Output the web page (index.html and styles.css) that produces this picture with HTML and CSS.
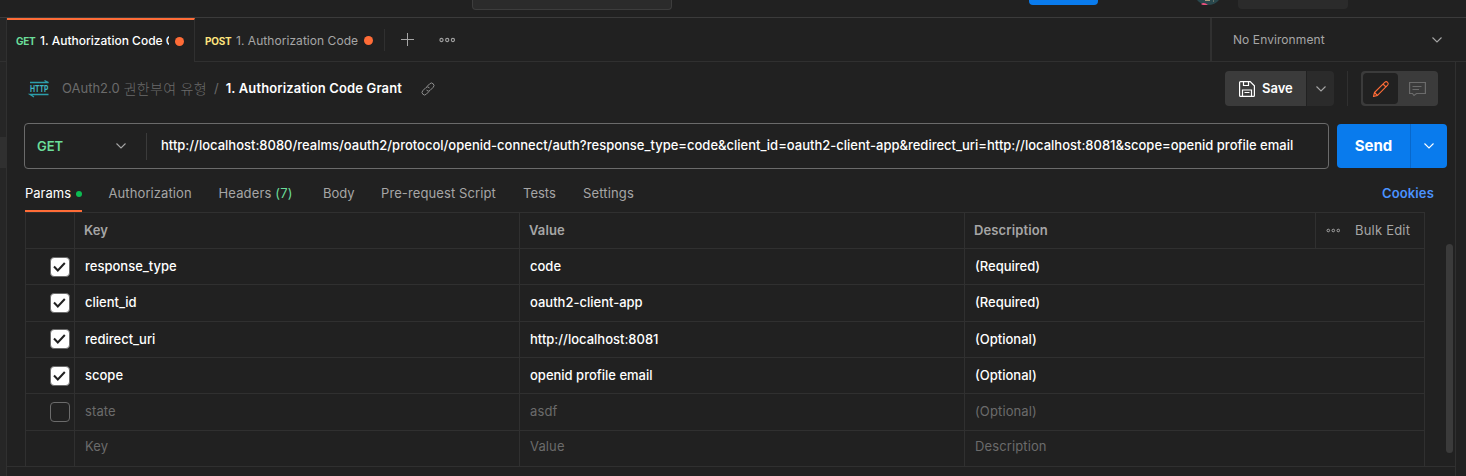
FILE: index.html
```html
<!DOCTYPE html>
<html lang="ko">
<head>
<meta charset="utf-8">
<title>1. Authorization Code Grant</title>
<link rel="stylesheet" href="styles.css">
</head>
<body>
<div class="app">
  <header class="topbar">
    <div class="search"></div>
    <div class="invite"></div>
    <svg class="avatar" width="24" height="5" viewBox="0 0 24 5"><path d="M1 0h22q-4 5-11 5T1 0z" fill="#29474c"/><path d="M5 4q3-2.500 7 1-5 .5-7-1z" fill="#f0507e"/><path d="M9 .5h5M17 1h1" stroke="#a99e82"/></svg>
    <div class="upgrade"></div>
  </header>
  <div class="body">
    <aside class="rail"><div class="rail-tabs"></div><div class="rail-selected"></div></aside>
    <main class="main">
      <div class="tabbar">
        <div class="tab tab-active"><b class="verb get">GET</b><span class="tab-name">1. Authorization Code G</span><i class="unsaved"></i></div>
        <div class="tab tab-second"><b class="verb post">POST</b><span class="tab-name">1. Authorization Code</span><i class="unsaved"></i></div>
        <div class="tab-tools">
          <svg width="14" height="14" viewBox="0 0 14 14" fill="none" stroke="#a6a6a6"><path d="M6.500 0v13M0 6.500h13"/></svg>
          <svg class="more" width="17" height="6" viewBox="0 0 17 6" fill="none" stroke="#a0a0a0" stroke-width="1.1"><circle cx="2.5" cy="3" r="1.6"/><circle cx="8.2" cy="3" r="1.6"/><circle cx="13.9" cy="3" r="1.6"/></svg>
        </div>
        <div class="environment"><span>No Environment</span><svg width="12" height="8" viewBox="0 0 12 8" fill="none" stroke="#a6a6a6" stroke-width="1.1"><path d="M1.5 1.5 6 6l4.500-4.500"/></svg></div>
      </div>
      <div class="workspace">
        <section class="request">
          <div class="crumbs">
            <svg class="http" width="19" height="18" viewBox="0 0 19 18"><g fill="none" stroke="#2d9eab" stroke-width="1.300"><path d="M0 2.500h18.500L14.500.5M18.500 14.500H0l4 2.500"/></g><text x="0" y="12.300" textLength="18.500" lengthAdjust="spacingAndGlyphs">HTTP</text></svg>
            <span class="folder">OAuth2.0 <span class="korean">권한부여 유형</span></span><span class="slash">/</span><span class="title">1. Authorization Code Grant</span>
            <svg class="link" width="14" height="14" viewBox="0 0 14 14" fill="none" stroke="#909090" stroke-width="1" stroke-linecap="round"><path d="M6.200 4.300 8.700 1.800a2.400 2.400 0 0 1 3.500 3.500L9.100 8.400a2.300 2.300 0 0 1-3.300 0M7.800 9.700l-2.500 2.500a2.400 2.400 0 0 1-3.500-3.500l3.100-3.100a2.300 2.300 0 0 1 3.300 0"/></svg>
            <div class="save"><svg width="16" height="16" viewBox="0 0 16 16" fill="none" stroke="#fff" stroke-width="1.200"><path d="M1.500.6h9.700l4.200 4.200v9.700q0 .9-.9.900h-13q-.9 0-.9-.9v-13q0-.9.9-.9zM4.500.8v3.700h5V.8M3.500 15.200V9h9v6.200M5.500 11.500h5"/></svg><span>Save</span></div>
            <div class="save-more"><svg width="12" height="8" viewBox="0 0 12 8" fill="none" stroke="#a6a6a6" stroke-width="1.1"><path d="M1.500 1.500 6 6l4.500-4.500"/></svg></div>
            <div class="divider"></div>
            <div class="toggle">
              <div class="toggle-on"><svg width="18" height="18" viewBox="0 0 18 18" fill="none" stroke="#ff6c37" stroke-width="1.100" stroke-linejoin="round"><path d="M1.500 16.500l1-4L12.700 2.300q1.500-1.300 2.900 0t0 2.900L5.500 15.400zM11 4l3 3M2.500 12.500l3 3"/></svg></div>
              <div class="toggle-off"><svg width="17" height="16" viewBox="0 0 17 16" fill="none" stroke="#6b6b6b" stroke-width="1.200"><path d="M.6 1.500h15.800v11H7.500L5 14.500l-1.500-2H.6zM3.500 5.500h9M3.500 8.500h6.500"/></svg></div>
            </div>
          </div>
          <div class="url-row">
            <div class="url-box">
              <div class="method"><span>GET</span><svg width="12" height="8" viewBox="0 0 12 8" fill="none" stroke="#a6a6a6" stroke-width="1.1"><path d="M1.500 1.500 6 6l4.500-4.500"/></svg></div>
              <div class="url">http://localhost:8080/realms/oauth2/protocol/openid-connect/auth?response_type=code&amp;client_id=oauth2-client-app&amp;redirect_uri=http://localhost:8081&amp;scope=openid profile email</div>
            </div>
            <div class="send"><span class="send-label">Send</span><span class="send-more"><svg width="12" height="8" viewBox="0 0 12 8" fill="none" stroke="#fff" stroke-width="1.1"><path d="M1.500 1.500 6 6l4.500-4.500"/></svg></span></div>
          </div>
          <nav class="sections">
            <span class="section-on">Params<i class="dot"></i></span><span class="s-auth">Authorization</span><span class="s-head">Headers <em>(7)</em></span><span class="s-body">Body</span><span class="s-pre">Pre-request Script</span><span class="s-tests">Tests</span><span class="s-set">Settings</span><span class="cookies">Cookies</span>
          </nav>
          <div class="params">
            <div class="row head"><div></div><div>Key</div><div>Value</div><div>Description</div><div class="bulk"><svg width="14" height="6" viewBox="0 0 14 6" fill="none" stroke="#a6a6a6" stroke-width="1"><circle cx="2.300" cy="2.500" r="1.300"/><circle cx="7.300" cy="2.500" r="1.300"/><circle cx="12.300" cy="2.500" r="1.300"/></svg><span>Bulk Edit</span></div></div>
            <div class="row"><div><i class="check"><svg width="14" height="12" viewBox="0 0 14 12"><path d="M1 5.500l3.800 4L11.800 2" fill="none" stroke="#212121" stroke-width="2"/></svg></i></div><div>response_type</div><div>code</div><div>(Required)</div></div>
            <div class="row tall"><div><i class="check"><svg width="14" height="12" viewBox="0 0 14 12"><path d="M1 5.500l3.800 4L11.800 2" fill="none" stroke="#212121" stroke-width="2"/></svg></i></div><div>client_id</div><div>oauth2-client-app</div><div>(Required)</div></div>
            <div class="row raised"><div><i class="check"><svg width="14" height="12" viewBox="0 0 14 12"><path d="M1 5.500l3.800 4L11.800 2" fill="none" stroke="#212121" stroke-width="2"/></svg></i></div><div>redirect_uri</div><div>http://localhost:8081</div><div>(Optional)</div></div>
            <div class="row"><div><i class="check"><svg width="14" height="12" viewBox="0 0 14 12"><path d="M1 5.500l3.800 4L11.800 2" fill="none" stroke="#212121" stroke-width="2"/></svg></i></div><div>scope</div><div>openid profile email</div><div>(Optional)</div></div>
            <div class="row tall disabled"><div><i class="check empty"></i></div><div>state</div><div>asdf</div><div>(Optional)</div></div>
            <div class="row blank"><div></div><div>Key</div><div>Value</div><div>Description</div></div>
          </div>
          <div class="scrollbar"></div>
        </section>
        <aside class="side"></aside>
      </div>
    </main>
  </div>
</div>
</body>
</html>
```
FILE: styles.css
```css
* { box-sizing: border-box; }
body { margin: 0; background: #212121; color: #a6a6a6; font: 13px/20px Inter, "Noto Sans CJK KR", sans-serif; overflow: hidden; }
svg { display: block; flex: none; }
i, em { font-style: normal; }
.app { width: 1466px; height: 476px; display: flex; flex-direction: column; white-space: nowrap; }

.topbar { height: 18px; border-bottom: 1px solid #3b3b3b; display: flex; align-items: flex-start; padding-left: 472px; }
.search { width: 200px; height: 10px; background: #2b2b2b; border: 1px solid #3d3d3d; border-top: 0; border-radius: 0 0 4px 4px; }
.invite { width: 69px; height: 5px; margin-left: 357px; background: #097bed; border-radius: 0 0 4px 4px; }
.avatar { margin-left: 98px; }
.upgrade { width: 110px; height: 9px; margin-left: 18px; background: #2b2b2b; border-radius: 0 0 4px 4px; }

.body { flex: 1; display: flex; min-height: 0; }
.rail { width: 7px; background: #262626; border-right: 1px solid #303030; }
.rail-tabs { height: 44px; border-bottom: 1px solid #303030; }
.rail-selected { height: 31px; margin-top: 75px; background: #303030; }
.main { flex: 1; display: flex; flex-direction: column; }

.tabbar { height: 44px; display: flex; border-bottom: 1px solid #303030; }
.tab { display: flex; align-items: center; font-size: 12px; padding-top: 2px; }
.tab-active { width: 188px; height: 44px; border-top: 2px solid #ff6c37; border-right: 1px solid #303030; background: #212121; padding: 0 0 0 9px; color: #fff; font-weight: 500; }
.tab-second { padding-left: 10px; width: 189px; }
.verb { font-size: 10px; font-weight: 700; letter-spacing: -.25px; }
.get { width: 24px; color: #6bdd9a; }
.post { width: 31px; color: #ffe47e; }
.tab-name { width: 129px; overflow: hidden; }
.tab-second .tab-name { width: 128px; letter-spacing: .05px; }
.unsaved { width: 9px; height: 9px; margin-left: 6px; border-radius: 50%; background: #ff6c37; }
.tab-second .unsaved { margin-left: 0; }
.tab-tools { display: flex; align-items: center; height: 22px; margin-top: 11px; border-left: 1px solid #303030; padding-left: 16px; }
.more { margin-left: 24px; }
.environment { width: 256px; margin-left: auto; border-left: 2px solid #303030; display: flex; justify-content: space-between; align-items: center; padding: 0 23px 0 21px; font-size: 12px; letter-spacing: .08px; }

.workspace { flex: 1; display: flex; min-height: 0; }
.request { width: 1448px; position: relative; }
.side { width: 11px; border-left: 1px solid #303030; }
.crumbs { height: 53px; padding: 0 17px 0 23px; display: flex; align-items: center; }
.crumbs > span, .save > span { padding-bottom: 2px; }
.http { overflow: visible; }
.http text { font: 700 9.500px Inter, sans-serif; fill: #3fb6c4; }
.folder { margin-left: 13px; color: #6b6b6b; width: 146px; display: flex; gap: 4px; }
.korean { font: 300 14px/20px "Noto Sans CJK KR", sans-serif; letter-spacing: .3px; }
.slash { margin-left: 6px; color: #6b6b6b; }
.title { margin-left: 7px; color: #fff; font-weight: 600; letter-spacing: .14px; width: 177px; }
.link { margin-left: 18px; }
.save { width: 81px; height: 35px; margin-left: auto; display: flex; align-items: center; padding-left: 14px; gap: 7px; background: #3b3b3b; border-radius: 4px 0 0 4px; color: #fff; font-weight: 600; }
.save-more { width: 27px; height: 35px; margin-left: 1px; display: grid; place-items: center; background: #2b2b2b; border-radius: 0 4px 4px 0; }
.divider { width: 1px; height: 35px; margin: 0 13px; background: #303030; }
.toggle { width: 77px; height: 35px; padding: 2px; display: flex; border-radius: 4px; background: #3b3b3b; }
.toggle-on { width: 35px; display: grid; place-items: center; background: #212121; border-radius: 4px; }
.toggle-off { flex: 1; display: grid; place-items: center; }

.url-row { display: flex; align-items: center; padding: 8px 0 0 17px; }
.url-box { width: 1305px; height: 46px; display: flex; align-items: center; border: 1px solid #6b6b6b; border-radius: 4px; }
.method { width: 122px; height: 27px; display: flex; align-items: center; justify-content: space-between; padding: 0 19px 0 12px; border-right: 1px solid #3b3b3b; color: #6bdd9a; font-weight: 600; }
.url { padding: 0 0 2px 14px; color: #fff; font-weight: 500; }
.send { width: 110px; height: 44px; margin-left: 8px; display: flex; background: #097bed; border-radius: 4px; color: #fff; }
.send-label { width: 73px; line-height: 44px; text-align: center; font-weight: 700; font-size: 15px; }
.send-more { flex: 1; display: grid; place-items: center; border-left: 1px solid #0868cb; }

.sections { height: 43px; display: flex; padding: 8px 21px 0 18px; line-height: 33px; }
.section-on { width: 57px; display: flex; align-items: center; justify-content: space-between; color: #fff; border-bottom: 2px solid #ff6c37; }
.dot { width: 6px; height: 6px; border-radius: 50%; background: #0cbb52; }
.s-auth { margin-left: 26.5px; width: 83px; letter-spacing: .1px; }
.s-head { margin-left: 27px; width: 75px; letter-spacing: .15px; }
.s-head em { color: #6bdd9a; }
.s-body { margin-left: 29.500px; width: 32px; }
.s-pre { margin-left: 26px; width: 115px; letter-spacing: .1px; }
.s-tests { margin-left: 27px; width: 33px; }
.s-set { margin-left: 27px; letter-spacing: .15px; }
.cookies { margin-left: auto; color: #4a93ff; font-weight: 600; letter-spacing: .15px; }

.params { width: 1400px; margin-left: 18px; border-left: 1px solid #303030; border-top: 1px solid #303030; }
.row { height: 36px; display: grid; grid-template-columns: 49px 445px 445px 460px; border-bottom: 1px solid #303030; line-height: 35px; color: #fff; font-weight: 500; }
.row > div { border-right: 1px solid #303030; padding-left: 10px; }
.row > div:first-child { display: flex; justify-content: flex-end; align-items: center; padding: 0 4px 0 0; }
.raised > div:first-child { padding-bottom: 1px; }
.tall { height: 37px; }
.head { grid-template-columns: 49px 445px 445px 351px 109px; color: #a6a6a6; font-weight: 600; }
.head > div, .blank > div { padding-left: 9px; letter-spacing: .12px; }
.head > .bulk { display: flex; align-items: center; gap: 15px; padding-left: 10px; font-weight: 400; letter-spacing: .2px; }
.disabled, .blank { color: #6b6b6b; font-weight: 400; }
.disabled > div { letter-spacing: .12px; }
.check { width: 20px; height: 20px; display: grid; place-items: center; background: #fff; border: 1px solid #6b6b6b; border-radius: 4px; }
.empty { background: none; }
.blank { height: 35px; border-bottom: 0; line-height: 32px; }
.blank > div { padding-left: 10px; line-height: 31px; }
.request::after { content: ""; display: block; height: 1px; background: #303030; }
.scrollbar { position: absolute; right: 2px; top: 182px; width: 7px; height: 209px; border-radius: 4px; background: #3b3b3b; }
```
